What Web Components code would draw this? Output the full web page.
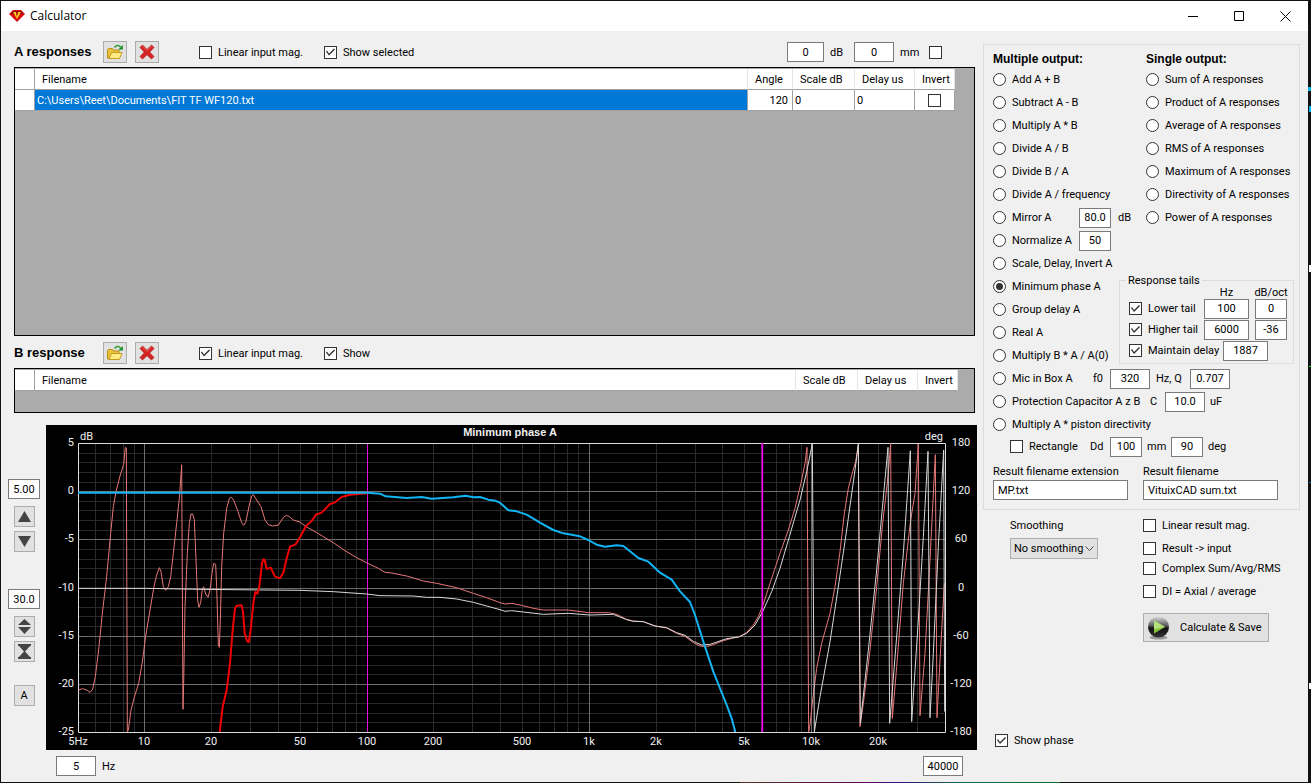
<!DOCTYPE html>
<html lang="en">
<head>
<meta charset="utf-8">
<title>Calculator</title>
<style>
    html { height: 100%; }
    body {
        margin: 0;
        min-height: 100vh;
        box-sizing: border-box;
        padding: 1px 3px 1px 1px;
        display: flex;
        background:
            linear-gradient(#00b4f0 0 0) right 87px / 3px 4px no-repeat,
            linear-gradient(#00b4f0 0 0) right 106px / 2px 6px no-repeat,
            linear-gradient(#fff 0 0) right 265px / 2px 7px no-repeat,
            linear-gradient(#00e000 0 0) right 366px / 2px 1px no-repeat,
            linear-gradient(#0060c0 0 0) right 482px / 2px 1px no-repeat,
            linear-gradient(#fff 0 0) right 683px / 2px 6px no-repeat,
            linear-gradient(90deg, #5c3020, #600060 40%, #301080 50%, #107050 70%, #107030) 740px bottom / 320px 1px no-repeat,
            #111;
        font: 11px/15px Roboto, "Liberation Sans", sans-serif;
        color: #000;
    }
</style>
</head>
<body>
<calc-window caption="Calculator">
    <div slot="left" class="left">
        <response-toolbar caption="A responses">
            <check-field class="wide">Linear input mag.</check-field>
            <check-field checked>Show selected</check-field>
            <scale-inputs slot="end"></scale-inputs>
        </response-toolbar>
        <response-grid class="grow" columns='["Angle","Scale dB","Delay us","Invert"]'
            rows='[["C:\\Users\\Reet\\Documents\\FIT TF WF120.txt","120","0","0",false]]'></response-grid>
        <response-toolbar caption="B response">
            <check-field class="wide" checked>Linear input mag.</check-field>
            <check-field checked>Show</check-field>
        </response-toolbar>
        <response-grid class="small" columns='["Scale dB","Delay us","Invert"]' rows="[]"></response-grid>
        <chart-area></chart-area>
    </div>
    <output-panel slot="right"></output-panel>
    <result-panel slot="right"></result-panel>
</calc-window>

<script>
const BASE = `
    :host, * { box-sizing: border-box; }
    input, button, select { font: inherit; color: inherit; margin: 0; border-radius: 0; }
    button { background: #e1e1e1; border: 1px solid #adadad; padding: 0; display: flex; align-items: center; justify-content: center; white-space: nowrap; }
    input[type=checkbox], input[type=radio] {
        appearance: none;
        flex: none;
        width: 13px;
        height: 13px;
        border: 1px solid #333;
        background: #fff;
    }
    input[type=checkbox]:checked::before {
        content: "";
        display: block;
        width: 11px;
        height: 11px;
        background: #333;
        clip-path: polygon(1px 5px, 2px 4px, 4px 7px, 9px 2px, 10px 3px, 4px 9px);
    }
    input[type=radio] { border-radius: 50%; display: grid; place-items: center; }
    input[type=radio]:checked::before {
        content: "";
        width: 7px;
        height: 7px;
        border-radius: 50%;
        background: #333;
    }
    label { display: flex; align-items: center; gap: 6px; white-space: nowrap; }
    h2 { margin: 0; font: bold 12px/18px "Liberation Sans", sans-serif; white-space: nowrap; }
`;

class CalcElement extends HTMLElement {
    constructor() {
        super();
        this.attachShadow({mode: 'open'});
    }

    connectedCallback() {
        this.shadowRoot.innerHTML = `<style>${BASE}${this.css()}</style>${this.html()}`;
    }

    css() { return ''; }
    html() { return ''; }
    attr(name, fallback = '') { return this.getAttribute(name) ?? fallback; }
}

class CalcWindow extends CalcElement {
    css() {
        return `
            :host { flex: 1; min-width: 0; display: flex; flex-direction: column; background: #f0f0f0; }
            header { display: flex; align-items: center; height: 30px; background: #fff; padding-left: 8px; }
            h1 { margin: 0 auto 0 5px; font: 12px/16px "Open Sans", "Noto Sans", sans-serif; }
            header button { width: 46px; height: 30px; background: none; border: 0; }
            main { flex: 1; display: grid; grid-template-columns: minmax(0, 1fr) 317px; gap: 6px; padding: 0 8px 0 7px; }
            .right { display: flex; flex-direction: column; padding-top: 13px; }
            ::slotted(.left) { display: flex; flex-direction: column; padding: 10px 0 6px; }
        `;
    }

    html() {
        return `
            <header>
                <svg width="16" height="14" viewBox="0 0 16 14">
                    <path d="M4 1h8l4 4-8 8-8-8z" fill="#d80f0f"/>
                    <path d="M4 2h8l2 3H2z" fill="#8e0808"/>
                    <path d="M4 3h3l1 5 1-5h3l-4 7z" fill="#f7d020"/>
                    <path d="M7 3h2l-1 4z" fill="#c01010"/>
                </svg>
                <h1>${this.attr('caption')}</h1>
                <button aria-label="Minimize"><svg width="11" height="11"><path d="M0 5.5h10" stroke="#000"/></svg></button>
                <button aria-label="Maximize"><svg width="11" height="11"><path d="M.5.5h9v9h-9z" stroke="#000" fill="none"/></svg></button>
                <button aria-label="Close"><svg width="11" height="11"><path d="M.5.5l10 10M10.5.5l-10 10" stroke="#000"/></svg></button>
            </header>
            <main>
                <slot name="left"></slot>
                <div class="right"><slot name="right"></slot></div>
            </main>
        `;
    }
}

class CheckField extends CalcElement {
    css() {
        return `
            :host { display: block; }
            :host(.wide) { width: 125px; }
            label { height: 15px; }
        `;
    }

    html() {
        return `<label><input type="checkbox" ${this.hasAttribute('checked') ? 'checked' : ''}><span><slot></slot></span></label>`;
    }
}

// text box, width is one of s / m / l / full
class NumField extends CalcElement {
    css() {
        return `
            :host { display: block; flex: none; }
            input { display: block; width: 100%; height: 20px; padding: 0 1px; border: 1px solid #7a7a7a; background: #fff; text-align: center; }
            :host([size=s]) { width: 32px; }
            :host([size=m]) { width: 40px; }
            :host([size=l]) { width: 45px; }
            :host([size=full]) { width: 135px; }
            :host([size=full]) input { text-align: left; padding: 0 4px; }
        `;
    }

    html() {
        return `<input type="text" value="${this.attr('value')}" aria-label="${this.attr('label')}">`;
    }
}

class ResponseToolbar extends CalcElement {
    css() {
        return `
            :host { display: flex; align-items: center; height: 22px; margin: 0 2px 4px 6px; }
            h2 { font-size: 13px; width: 89px; }
            button { width: 24px; height: 22px; margin-right: 8px; }
            .checks { display: flex; margin-left: 32px; }
            .end { margin-left: auto; }
        `;
    }

    html() {
        return `
            <h2>${this.attr('caption')}</h2>
            <button aria-label="Open">
                <svg width="18" height="16" viewBox="0 0 18 16">
                    <path d="M1.5 14V5.5l1-1h4l1 1.5h5.500v8z" fill="#e9c33c" stroke="#b98e15"/>
                    <path d="M3 14.500l2.500-6H16l-2.500 6z" fill="#ffec86" stroke="#c39a1c"/>
                    <path d="M8.500 3.500C10 1 13 .8 14.500 3" fill="none" stroke="#2f9e2f" stroke-width="1.500"/>
                    <path d="M16.800 1v4.500h-4.500z" fill="#128a20"/>
                </svg>
            </button>
            <button aria-label="Remove">
                <svg width="16" height="16" viewBox="0 0 16 16">
                    <path d="M3.500 1L8 5.300 12.500 1 15 3.500 10.700 8 15 12.500 12.500 15 8 10.700 3.500 15 1 12.500 5.300 8 1 3.500z" fill="#d62424" stroke="#b01818" stroke-width=".7"/>
                    <path d="M3.500 2l4.500 4.300L12.500 2" fill="none" stroke="#ea6a62"/>
                </svg>
            </button>
            <div class="checks"><slot></slot></div>
            <div class="end"><slot name="end"></slot></div>
        `;
    }
}

class ScaleInputs extends CalcElement {
    css() {
        return `
            :host { display: grid; grid-template-columns: 43px 24px 46px 29px 13px; align-items: center; padding-right: 33px; }
            num-field:first-of-type { width: 37px; }
        `;
    }

    html() {
        return `
            <num-field size="m" value="0" label="Scale"></num-field><span>dB</span>
            <num-field size="m" value="0" label="Distance"></num-field><span>mm</span>
            <input type="checkbox" aria-label="Invert all">
        `;
    }
}

class ResponseGrid extends CalcElement {
    css() {
        return `
            :host { display: block; margin: 0 2px 12px 6px; border: 1px solid #000; background: #ababab; padding: 1px 19px 0 0; min-height: 45px; }
            :host(.grow) { flex: 1; min-height: 120px; margin-bottom: 6px; }
            :host(.small) { padding-right: 16px; }
            table { width: 100%; border-collapse: separate; border-spacing: 0; table-layout: fixed; }
            th, td { height: 21px; padding: 0 2px; background: #fff; border-right: 1px solid #a0a0a0; border-bottom: 1px solid #a0a0a0; font-weight: normal; text-align: left; white-space: nowrap; }
            thead th { padding-left: 7px; border-right-color: #e5e5e5; }
            thead th:first-child { border-right-color: #a0a0a0; }
            .head { width: 20px; }
            .Angle { width: 45px; }
            .Scale { width: 62px; }
            .Delay { width: 60px; }
            .Invert { width: 40px; }
            td.name { background: #0078d7; color: #fff; }
            td.Angle { text-align: right; padding-right: 4px; }
            td input { display: block; margin: auto; }
        `;
    }

    html() {
        const columns = JSON.parse(this.attr('columns', '[]'));
        const rows = JSON.parse(this.attr('rows', '[]'));
        const cls = name => name.split(' ')[0];
        const cell = (value, i) => typeof value === 'boolean'
            ? `<td><input type="checkbox" aria-label="Invert" ${value ? 'checked' : ''}></td>`
            : `<td class="${cls(columns[i])}">${value}</td>`;
        return `
            <table>
                <thead><tr><th class="head"></th><th>Filename</th>${columns.map(c => `<th class="${cls(c)}">${c}</th>`).join('')}</tr></thead>
                <tbody>${rows.map(([name, ...rest]) => `<tr><th></th><td class="name">${name}</td>${rest.map(cell).join('')}</tr>`).join('')}</tbody>
            </table>
        `;
    }
}

class ChartArea extends CalcElement {
    css() {
        return `
            :host { display: grid; grid-template-columns: 32px minmax(0, 1fr); column-gap: 6px; }
            .side { display: flex; flex-direction: column; align-items: center; gap: 37px; padding-top: 54px; }
            .group { display: flex; flex-direction: column; align-items: center; gap: 4px; }
            .group num-field { margin-bottom: 3px; }
            .group:last-child { margin-top: -14px; }
            .side button { width: 21px; height: 21px; }
            .range { grid-column: 2; display: flex; align-items: center; gap: 6px; padding: 6px 14px 0 10px; }
            .range num-field:last-child { margin-left: auto; }
        `;
    }

    html() {
        const icon = d => `<svg width="15" height="15"><path d="${d}" fill="#444"/></svg>`;
        return `
            <div class="side">
                <div class="group">
                    <num-field size="s" value="5.00" label="Maximum dB"></num-field>
                    <button aria-label="Up">${icon('M7.500 2L14 13H1z')}</button>
                    <button aria-label="Down">${icon('M1 2h13L7.500 13z')}</button>
                </div>
                <div class="group">
                    <num-field size="s" value="30.0" label="Span dB"></num-field>
                    <button aria-label="Expand">${icon('M7.500 0L14 6H1zM1 8h13l-6.500 7z')}</button>
                    <button aria-label="Compress">${icon('M1 0h13v2H13L8 7.500l5 5.500h1v2H1v-2h1l5-5.500L2 2H1z')}</button>
                </div>
                <div class="group"><button>A</button></div>
            </div>
            <response-chart></response-chart>
            <div class="range">
                <num-field size="m" value="5" label="Minimum frequency"></num-field><span>Hz</span>
                <num-field size="m" value="40000" label="Maximum frequency"></num-field>
            </div>
        `;
    }
}

// traces are in thirds of a plot pixel
const TRACES = [
    {color: '#e87878', width: 3, points: `1,741 14,737 28,742 36,748 44,739 52,701 63,611 73,511 86,401 98,271 106,191 114,146 126,99 137,64 142,13 145,15 148,866 151,861 159,801 170,759 182,721 194,651 202,586 216,501 228,431 236,396 244,374 249,386 256,431 263,442 271,431 278,401 286,331 296,241 304,166 308,111 311,65 315,799 317,721 321,491 328,331 334,241 339,213 344,213 349,231 354,351 359,471 363,493 368,479 373,439 377,431 383,453 390,463 396,441 402,391 407,361 413,364 416,431 421,606 424,613 427,531 431,371 437,271 446,196 454,166 460,163 467,171 480,206 491,239 497,247 503,239 514,186 521,159 526,155 536,171 549,191 561,231 571,245 584,249 601,246 616,224 625,217 634,221 646,231 666,237 681,249 716,269 766,299 801,323 836,344 869,361 901,376 921,388 941,390 986,399 1036,414 1076,421 1136,434 1186,451 1226,464 1266,479 1281,483 1301,481 1331,487 1366,496 1396,501 1471,501 1531,509 1591,509 1616,514 1646,529 1666,534 1696,536 1731,549 1766,555 1796,571 1821,580 1846,599 1866,609 1886,611 1906,605 1936,593 1966,585 1986,581 2006,568 2026,546 2041,521 2054,489 2076,421 2106,331 2131,261 2151,196 2171,111 2181,61 2187,13 2192,866 2196,846 2204,771 2216,676 2231,601 2256,511 2271,431 2286,326 2299,211 2311,136 2324,86 2333,56 2341,6 2346,851 2356,781 2376,621 2396,431 2414,241 2431,91 2438,1 2443,826 2456,671 2476,421 2498,231 2511,151 2521,3 2526,818 2541,631 2556,351 2572,35 2577,824 2586,651 2599,421`},
    {color: '#d8d8d8', width: 3, points: `1,436 206,436 366,439 666,442 766,446 866,453 906,458 1006,459 1046,463 1086,463 1136,468 1186,478 1226,489 1266,500 1281,505 1301,503 1336,507 1396,514 1471,511 1536,516 1606,514 1646,530 1666,535 1696,536 1731,549 1766,554 1796,569 1821,577 1846,595 1871,606 1896,604 1946,587 1981,582 2006,571 2031,546 2054,506 2081,446 2106,376 2134,281 2166,171 2186,86 2203,3 2209,866 2226,761 2256,596 2278,451 2306,261 2331,81 2341,3 2347,841 2371,621 2396,381 2419,131 2430,13 2435,841 2456,581 2476,331 2497,23 2501,836 2521,531 2536,281 2550,25 2556,824 2566,631 2581,311 2597,21 2600,806`},
    {color: '#f00000', width: 6, points: `425,868 434,791 446,741 456,661 464,561 471,496 476,488 491,487 495,506 500,571 506,591 512,599 518,561 526,481 532,446 538,453 544,431 552,361 556,348 560,351 566,378 578,374 591,401 606,406 616,389 626,346 636,311 653,304 666,283 684,249 701,234 714,215 731,209 756,183 771,178 791,162 816,155 869,151`},
    {color: '#12b4f4', width: 6, points: `0,149 869,149 906,152 923,160 986,165 1031,162 1061,167 1126,163 1163,158 1186,163 1206,162 1231,170 1251,173 1266,179 1291,202 1316,205 1346,215 1386,239 1426,261 1456,271 1506,280 1531,291 1556,305 1581,311 1616,307 1636,309 1656,325 1681,345 1711,356 1746,389 1781,410 1806,445 1836,477 1851,516 1876,596 1906,686 1946,786 1961,826 1972,868`}
];

class ResponseChart extends CalcElement {
    css() {
        return `
            :host { display: block; background: #000; }
            .chart { display: block; width: 100%; height: auto; }
            text { fill: #f0f0f0; font-size: 11px; }
            .title { font: bold 11px "Liberation Sans", sans-serif; }
            .end { text-anchor: end; }
            .mid { text-anchor: middle; }
        `;
    }

    freqX(f) {
        return Math.floor(32 + 867 * Math.log(f / 5) / Math.log(8000)) + 0.5;
    }

    dbY(db) {
        return Math.round(18 + (5 - db) * 289 / 30) + 0.5;
    }

    grid() {
        const minor = [];
        const major = [];
        for (let db = 4; db > -25; db--) {
            (db % 5 ? minor : major).push(`M32 ${this.dbY(db)}H899`);
        }
        for (const decade of [1, 10, 100, 1000, 10000]) {
            for (let n = 1; n < 10; n++) {
                const f = n * decade;
                if (f > 5 && f < 40000) {
                    (n === 1 ? major : minor).push(`M${this.freqX(f)} 18V307`);
                }
            }
        }
        return `
            <path d="${minor.join('')}" stroke="#292929"/>
            <path d="${major.join('')}" stroke="#6c6c6c"/>
        `;
    }

    html() {
        const freqs = {'5Hz': 5, '10': 10, '20': 20, '50': 50, '100': 100, '200': 200, '500': 500, '1k': 1000, '2k': 2000, '5k': 5000, '10k': 10000, '20k': 20000};
        const levels = [5, 0, -5, -10, -15, -20, -25];
        const lines = TRACES.map(t => `<polyline points="${t.points}" fill="none" stroke="${t.color}" stroke-width="${t.width}" stroke-linejoin="bevel"/>`);
        return `
            <svg class="chart" viewBox="0 0 931 325">
                ${this.grid()}
                <path d="M${this.freqX(100)} 18V307" stroke="#e010e0"/>
                <path d="M32.500 18.500H899.500V307.500H32.500z" fill="none" stroke="#ddd"/>
                <svg x="32" y="18" width="867" height="289" viewBox="0 0 2601 867">
                    ${lines.slice(0, 2).join('')}
                    <path d="M2053 0V867" stroke="#ff00ff" stroke-width="5"/>
                    ${lines.slice(2).join('')}
                </svg>
                ${Object.entries(freqs).map(([name, f]) => `<text class="mid" x="${Math.floor(this.freqX(f))}" y="320">${name}</text>`).join('')}
                ${levels.map(db => `<text class="end" x="28" y="${Math.floor(this.dbY(db)) + 3}">${db}</text>`).join('')}
                ${levels.map(db => `<text class="mid" x="915" y="${Math.floor(this.dbY(db)) + 3}">${db * 12 + 120}</text>`).join('')}
                <text x="34" y="15">dB</text>
                <text class="end" x="897" y="15">deg</text>
                <text class="mid title" x="464" y="11">Minimum phase A</text>
            </svg>
        `;
    }
}

class OutputPanel extends CalcElement {
    css() {
        return `
            :host { display: block; border: 1px solid #dcdcdc; padding: 5px 5px 9px 9px; }
            .columns { display: grid; grid-template-columns: 126px minmax(0, 1fr); }
            .single { display: flex; flex-direction: column; justify-content: space-between; }
            .list { padding-left: 27px; }
            .row { display: flex; align-items: center; height: 23px; white-space: nowrap; }
            .row > * { flex: none; }
            .row .lead { width: 86px; }
            .row .unit { padding-left: 7px; }
            .mic .lead { width: 100px; }
            .cap .lead { width: 157px; }
            .cap .unit { padding-left: 5px; }
            .mic .lead + span { width: 17px; }
            .cap .lead + span { width: 15px; }
            .mic .unit { width: 40px; padding-left: 6px; }
            .piston { height: 21px; padding-left: 17px; }
            .piston .lead { width: 80px; }
            .piston .lead + span { width: 20px; }
            .piston .unit { width: 29px; padding-left: 5px; }
            fieldset { margin: 0 0 3px; border: 1px solid #dcdcdc; padding: 0 6px 2px 9px; min-width: 0; }
            legend { padding: 0 2px; margin-left: -3px; line-height: 13px; }
            .tail { display: grid; grid-template-columns: minmax(0, 1fr) 45px 32px; column-gap: 6px; align-items: center; height: 21px; }
            .tail.names { height: 11px; line-height: 11px; text-align: center; white-space: nowrap; }
            .tail.names span:last-child { justify-self: center; }
            .tail.delay { grid-template-columns: minmax(0, 1fr) 45px 13px; }
            .files { display: grid; grid-template-columns: 150px 135px; padding-top: 6px; }
            .files label { display: block; line-height: 17px; }
        `;
    }

    radio(text) {
        return `<label class="lead"><input type="radio" name="mode" ${text === 'Minimum phase A' ? 'checked' : ''}>${text}</label>`;
    }

    row(text, rest = '', cls = '') {
        return `<div class="row ${cls}">${this.radio(text)}${rest}</div>`;
    }

    tail(text, hz, slope) {
        return `<div class="tail"><check-field checked>${text}</check-field>
            <num-field size="l" value="${hz}" label="${text} Hz"></num-field>
            <num-field size="s" value="${slope}" label="${text} dB/oct"></num-field></div>`;
    }

    html() {
        return `
            <div class="columns">
                <div>
                    <h2>Multiple output:</h2>
                    ${['Add A + B', 'Subtract A - B', 'Multiply A * B', 'Divide A / B', 'Divide B / A', 'Divide A / frequency'].map(t => this.row(t)).join('')}
                    ${this.row('Mirror A', '<num-field size="s" value="80.0" label="Mirror level"></num-field><span class="unit">dB</span>')}
                    ${this.row('Normalize A', '<num-field size="s" value="50" label="Normalize"></num-field>')}
                    ${['Scale, Delay, Invert A', 'Minimum phase A', 'Group delay A', 'Real A', 'Multiply B * A / A(0)'].map(t => this.row(t)).join('')}
                </div>
                <div class="single">
                    <div class="list">
                        <h2>Single output:</h2>
                        ${['Sum', 'Product', 'Average', 'RMS', 'Maximum', 'Directivity', 'Power'].map(t => this.row(t + ' of A responses')).join('')}
                    </div>
                    <fieldset>
                        <legend>Response tails</legend>
                        <div class="tail names"><span></span><span>Hz</span><span>dB/oct</span></div>
                        ${this.tail('Lower tail', '100', '0')}
                        ${this.tail('Higher tail', '6000', '-36')}
                        <div class="tail delay"><check-field checked>Maintain delay</check-field><num-field size="l" value="1887" label="Delay"></num-field></div>
                    </fieldset>
                </div>
            </div>
            ${this.row('Mic in Box A', '<span>f0</span><num-field size="m" value="320" label="f0"></num-field><span class="unit">Hz, Q</span><num-field size="m" value="0.707" label="Q"></num-field>', 'mic')}
            ${this.row('Protection Capacitor A z B', '<span>C</span><num-field size="m" value="10.0" label="C"></num-field><span class="unit">uF</span>', 'cap')}
            ${this.row('Multiply A * piston directivity')}
            <div class="row piston">
                <check-field class="lead">Rectangle</check-field>
                <span>Dd</span><num-field size="s" value="100" label="Dd"></num-field><span class="unit">mm</span>
                <num-field size="s" value="90" label="Angle"></num-field><span class="unit">deg</span>
            </div>
            <div class="files">
                <label>Result filename extension<num-field size="full" value="MP.txt" label="Result filename extension"></num-field></label>
                <label>Result filename<num-field size="full" value="VituixCAD sum.txt" label="Result filename"></num-field></label>
            </div>
        `;
    }
}

class ResultPanel extends CalcElement {
    css() {
        return `
            :host { flex: 1; display: flex; flex-direction: column; justify-content: space-between; gap: 20px; padding: 8px 0 34px 12px; }
            .top { display: grid; grid-template-columns: 133px 1fr; padding-left: 15px; }
            .smooth { display: flex; flex-direction: column; align-items: flex-start; gap: 5px; }
            .select { display: grid; width: 88px; }
            .select > * { grid-area: 1 / 1; }
            select { appearance: none; height: 21px; background: #e1e1e1; border: 1px solid #adadad; padding: 0 3px; }
            .select svg { justify-self: end; align-self: center; margin-right: 4px; pointer-events: none; }
            .checks { display: flex; flex-direction: column; gap: 5px; }
            .pair { display: flex; flex-direction: column; gap: 8px; }
            .save { width: 126px; height: 29px; margin-top: 9px; justify-content: flex-start; padding-left: 3px; gap: 10px; }
        `;
    }

    html() {
        return `
            <div class="top">
                <div class="smooth">
                    <label for="smoothing">Smoothing</label>
                    <div class="select">
                        <select id="smoothing"><option>No smoothing</option></select>
                        <svg width="9" height="6"><path d="M.5.5l4 4 4-4" fill="none" stroke="#444"/></svg>
                    </div>
                </div>
                <div class="checks">
                    <div class="pair">
                        <check-field>Linear result mag.</check-field>
                        <check-field>Result -&gt; input</check-field>
                    </div>
                    <div class="pair">
                        <check-field>Complex Sum/Avg/RMS</check-field>
                        <check-field>DI = Axial / average</check-field>
                    </div>
                    <button class="save">
                        <svg width="23" height="24" viewBox="0 0 23 24">
                            <defs><linearGradient id="ball" x2="0" y2="1">
                                <stop offset="0" stop-color="#ddd"/><stop offset=".45" stop-color="#555"/><stop offset=".55" stop-color="#111"/><stop offset="1" stop-color="#333"/>
                            </linearGradient></defs>
                            <ellipse cx="11.500" cy="21.500" rx="9" ry="2" fill="#999"/>
                            <circle cx="11.500" cy="11" r="10.500" fill="url(#ball)"/>
                            <path d="M7 4.500L18 11 7 17.500z" fill="#86c440"/>
                            <path d="M7 4.500L18 11 7 13z" fill="#b5e07a"/>
                        </svg>
                        Calculate &amp; Save
                    </button>
                </div>
            </div>
            <check-field checked>Show phase</check-field>
        `;
    }
}

customElements.define('num-field', NumField);
customElements.define('check-field', CheckField);
customElements.define('scale-inputs', ScaleInputs);
customElements.define('response-toolbar', ResponseToolbar);
customElements.define('response-grid', ResponseGrid);
customElements.define('response-chart', ResponseChart);
customElements.define('chart-area', ChartArea);
customElements.define('output-panel', OutputPanel);
customElements.define('result-panel', ResultPanel);
customElements.define('calc-window', CalcWindow);
</script>
</body>
</html>
